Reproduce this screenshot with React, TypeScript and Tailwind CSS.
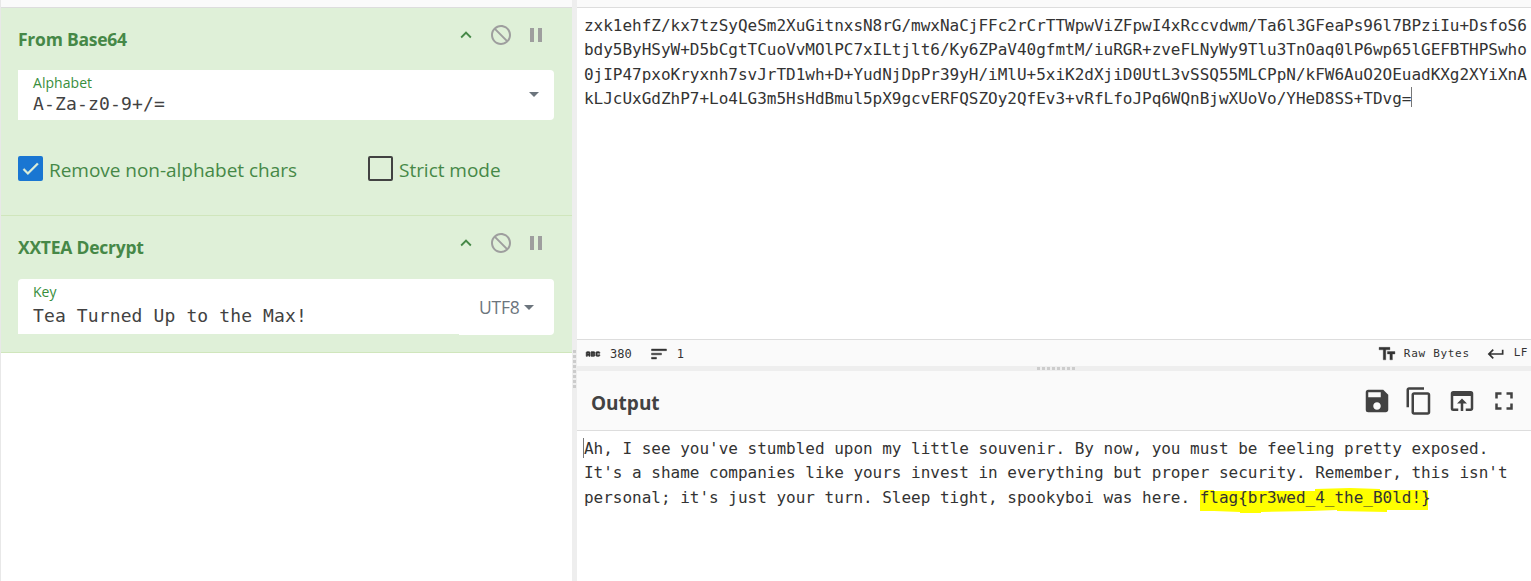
import React from "react";
import {
  MdSave,
  MdContentCopy,
  MdOpenInBrowser,
  MdFullscreen,
  MdKeyboardReturn,
  MdTextFields,
  MdSort,
  MdPause,
  MdKeyboardArrowUp,
  MdNotInterested,
  MdAbc,
  MdArrowDropDown,
  MdCheck,
} from "react-icons/md";

const INPUT_LINES = [
  "zxk1ehfZ/kx7tzSyQeSm2XuGitnxsN8rG/mwxNaCjFFc2rCrTTWpwViZFpwI4xRccvdwm/Ta6l3GFeaPs96l7BPziIu+DsfoS6",
  "bdy5ByHSyW+D5bCgtTCuoVvMOlPC7xILtjlt6/Ky6ZPaV40gfmtM/iuRGR+zveFLNyWy9Tlu3TnOaq0lP6wp65lGEFBTHPSwho",
  "0jIP47pxoKryxnh7svJrTD1wh+D+YudNjDpPr39yH/iMlU+5xiK2dXjiD0UtL3vSSQ55MLCPpN/kFW6AuO2OEuadKXg2XYiXnA",
  "kLJcUxGdZhP7+Lo4LG3m5HsHdBmul5pX9gcvERFQSZOy2QfEv3+vRfLfoJPq6WQnBjwXUoVo/YHeD8SS+TDvg=",
];

const DOTS = [0, 1, 2, 3, 4, 5, 6, 7];

function OperationHeader({ title }: { title: string }) {
  return (
    <div className="flex items-start justify-between pt-[14px] pr-[24.5px] pl-[17px]">
      <h2 className="pt-[3px] text-[17.5px] leading-[26px] font-bold tracking-[-0.24px] text-[#468847]">{title}</h2>
      <div className="flex items-center gap-[11px] text-[#9e9e9e]">
        <MdKeyboardArrowUp className="size-6 p-[1px] text-[#468847]" />
        <MdNotInterested className="size-6" />
        <MdPause className="size-6" />
      </div>
    </div>
  );
}

function Editor({ children }: { children: React.ReactNode }) {
  return (
    <div className="pl-[7px] font-['DejaVu_Sans_Mono',monospace] text-[16px] leading-[24.5px] tracking-[-0.012px] whitespace-pre text-[#333]">
      {children}
    </div>
  );
}

export default function App() {
  return (
    <div className="flex h-[581px] w-[1531px] overflow-hidden bg-white font-['Open_Sans','Noto_Sans',sans-serif]">
      <section className="flex w-[572px] shrink-0 flex-col border-l border-[#e8e8e8]">
        <div className="h-2 border-b border-[#ddd] bg-[#fafafa]" />
        <article className="h-[208px] border-b border-[#d0e6bc] bg-[#dff0d8]">
          <div className="h-[62px] pt-[0.5px]">
            <OperationHeader title="From Base64" />
          </div>
          <div className="ml-[17px] flex h-[50px] w-[536px] items-center justify-between rounded-r-[4px] bg-white pr-[8px] pl-[15px]">
            <div className="pb-[2px]">
              <div className="text-[14px] leading-[17px] tracking-[0.05px] text-[#388e3c]">Alphabet</div>
              <div className="pt-[2px] font-['DejaVu_Sans_Mono',monospace] text-[18px] leading-[22px] tracking-[0.16px] text-[#424242]">A-Za-z0-9+/=</div>
            </div>
            <MdArrowDropDown className="mb-[2px] size-6 text-[#6c757d]" />
          </div>
          <div className="mt-9 flex h-[26px] pl-[17px] text-[19px] leading-[28px] text-[#468847]">
            <div className="flex w-[350px] gap-[6px]">
              <span className="flex size-[25px] items-center justify-center rounded-[2px] bg-[#1976d2]">
                <MdCheck className="size-[21px] stroke-[#dff0d8] stroke-[0.6] text-[#dff0d8] [&>path:first-child]:stroke-none" />
              </span>
              <span className="tracking-[-0.03px]">Remove non-alphabet chars</span>
            </div>
            <div className="flex gap-[6px]">
              <span className="size-[25px] rounded-[2px] border-2 border-[#424242]" />
              <span className="tracking-[-0.03px]">Strict mode</span>
            </div>
          </div>
        </article>
        <article className="h-[137px] border-b border-[#d0e6bc] bg-[#dff0d8]">
          <div className="h-[63px] pt-[0.5px]">
            <OperationHeader title="XXTEA Decrypt" />
          </div>
          <div className="ml-[17px] flex w-[536px]">
            <div className="h-[55px] w-[441px] rounded-tl-[4px] bg-white pt-[4px] pl-[15px]">
              <div className="text-[14px] leading-[18px] tracking-[0.05px] text-[#388e3c]">Key</div>
              <div className="pt-[4px] font-['DejaVu_Sans_Mono',monospace] text-[18px] leading-[22px] tracking-[0.12px] whitespace-pre text-[#424242]">Tea Turned Up to the Max!</div>
            </div>
            <div className="flex h-[56px] w-[95px] items-center rounded-r-[4px] bg-white pl-[20px] text-[#6c757d]">
              <span className="pt-px text-[17.5px] font-medium tracking-[-0.2px]">UTF8</span>
              <MdArrowDropDown className="-ml-[3px] size-6" />
            </div>
          </div>
        </article>
      </section>

      <div className="flex w-[5px] shrink-0 flex-col items-center gap-[2px] bg-[#eee] pt-[350px]">
        {DOTS.map((d) => (
          <span key={d} className="size-[3px] bg-[#ccc]" />
        ))}
      </div>

      <main className="flex w-[954px] shrink-0 flex-col">
        <div className="h-2 shrink-0 border-b border-[#ddd] bg-[#fafafa]" />
        <div className="h-[331px] pt-[5.5px]">
          <Editor>
            {INPUT_LINES.map((line, i) => (
              <div key={i} className="flex">
                <span>{line}</span>
                {i === 3 && <span className="h-5 w-px bg-[#777]" />}
              </div>
            ))}
          </Editor>
        </div>
        <div className="flex h-[27px] shrink-0 items-center border-t border-[#ddd] bg-[#fafafa] pt-px pl-[7px] font-['DejaVu_Sans_Mono',monospace] text-[12px] text-[#333]">
          <MdAbc className="size-[18px] stroke-[#333] stroke-1 [&>path:first-child]:stroke-none" />
          <span className="ml-[8px]">380</span>
          <MdSort className="ml-[17px] size-5 stroke-[#333] stroke-[0.5] [&>path:first-child]:stroke-none" />
          <span className="ml-[8px]">1</span>
          <MdTextFields className="mr-px ml-auto size-5 stroke-[#333] stroke-[0.4] [&>path:first-child]:stroke-none" />
          <span className="ml-[6px] pt-px text-[11px] tracking-[0.7px]">Raw Bytes</span>
          <MdKeyboardReturn className="ml-[16px] size-5" />
          <span className="mr-[3px] ml-[8px] text-[11px] tracking-[0.5px]">LF</span>
        </div>
        <div className="flex h-[5px] shrink-0 items-center justify-start gap-[2px] bg-[#eee] pl-[460px]">
          {DOTS.map((d) => (
            <span key={d} className="size-[3px] bg-[#ccc]" />
          ))}
        </div>
        <header className="flex h-[60px] shrink-0 items-center border-b border-[#ddd] bg-[#fafafa] pl-[14px] text-[#424242]">
          <h1 className="pt-[5px] text-[19px] font-bold">Output</h1>
          <div className="ml-auto flex gap-3 pr-[12px]">
            <MdSave className="-ml-px size-[30px]" />
            <MdContentCopy className="mr-px size-[30px]" />
            <MdOpenInBrowser className="size-[30px]" />
            <MdFullscreen className="size-[30px]" />
          </div>
        </header>
        <div className="relative grow pt-[5.5px]">
          <span className="absolute top-[7px] left-[6px] h-5 w-px bg-[#777]" />
          <Editor>
            <div>Ah, I see you've stumbled upon my little souvenir. By now, you must be feeling pretty exposed.</div>
            <div>It's a shame companies like yours invest in everything but proper security. Remember, this isn't</div>
            <div>
              personal; it's just your turn. Sleep tight, spookyboi was here.{" "}
              <span className="relative isolate">
                <svg className="absolute top-[-1px] left-0 -z-10 h-[26px] w-[229px]" viewBox="0 0 229 26" fill="#ffff00">
                  <path d="M0 3H14V4H115V2L150 1L180 2V3H228V23H187V25L137 24V23L110 24L61 25V26H40V25L14 24H0Z" />
                </svg>
                {"flag{br3wed_4_the_B0ld!}"}
              </span>
            </div>
          </Editor>
        </div>
      </main>
    </div>
  );
}
